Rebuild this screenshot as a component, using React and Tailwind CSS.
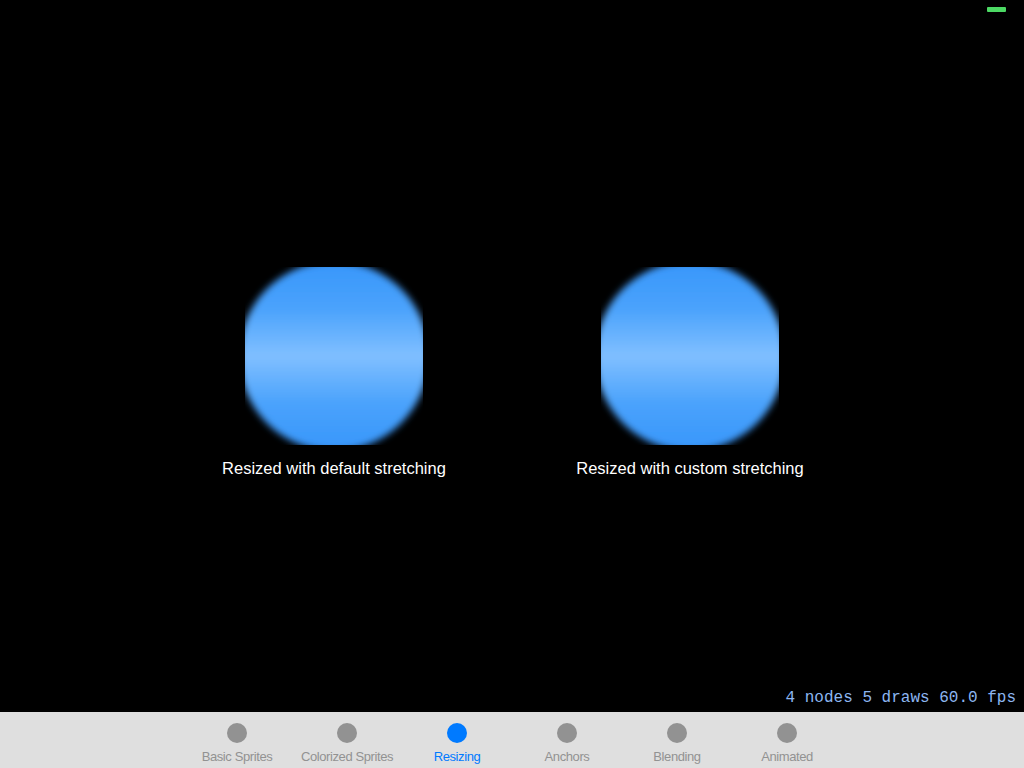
import React from "react";

const tabs = [
  { label: "Basic Sprites" },
  { label: "Colorized Sprites" },
  { label: "Resizing", active: true },
  { label: "Anchors" },
  { label: "Blending" },
  { label: "Animated" },
];

const Bubble = ({ id }) => (
  <svg width="178" height="178" viewBox="0 0 178 178" className="block">
    <defs>
      <linearGradient id={`g-${id}`} x1="0" y1="0" x2="0" y2="1">
        <stop offset="0" stopColor="#3796fb" />
        <stop offset="0.25" stopColor="#4aa2fc" />
        <stop offset="0.5" stopColor="#80bfff" />
        <stop offset="0.75" stopColor="#4aa2fc" />
        <stop offset="1" stopColor="#3796fb" />
      </linearGradient>
      <filter id={`b-${id}`} x="-20%" y="-20%" width="140%" height="140%">
        <feGaussianBlur stdDeviation="3.5" />
      </filter>
    </defs>
    <circle cx="89" cy="89" r="95" fill={`url(#g-${id})`} filter={`url(#b-${id})`} />
  </svg>
);

export default function App() {
  return (
    <div
      className="w-[1024px] h-[768px] flex flex-col overflow-hidden"
      style={{ fontFamily: '"Liberation Sans", Arial, sans-serif' }}
    >
      {/* scene */}
      <div className="relative h-[712px] bg-black">
        <div className="absolute top-[7px] right-[18px] w-[19px] h-[5px] rounded-[1px] bg-[#4cd964]" />

        <div className="flex justify-center pt-[267px]">
          <div className="w-[356px] flex flex-col items-center">
            <Bubble id="a" />
            <p className="mt-[13px] text-[16.5px] leading-[20px] text-white">
              Resized with default stretching
            </p>
          </div>
          <div className="w-[356px] flex flex-col items-center">
            <Bubble id="b" />
            <p className="mt-[13px] text-[16.5px] leading-[20px] text-white">
              Resized with custom stretching
            </p>
          </div>
        </div>

        <div
          className="absolute right-[8px] bottom-[4px] text-[16px] leading-[20px] text-[#8db6f0]"
          style={{ fontFamily: '"Liberation Mono", "Courier New", monospace' }}
        >
          4 nodes 5 draws 60.0 fps
        </div>
      </div>

      {/* tab bar */}
      <div className="h-[56px] bg-[#dfdfdf] flex justify-center">
        {tabs.map((t) => (
          <div key={t.label} className="w-[110px] flex flex-col items-center pt-[11px]">
            <div
              className={
                t.active
                  ? "w-[20px] h-[20px] rounded-full bg-[#007aff]"
                  : "w-[20px] h-[20px] rounded-full bg-[#929292]"
              }
            />
            <span
              className={
                t.active
                  ? "mt-[5px] text-[13px] leading-[17px] tracking-[-0.4px] text-[#007aff]"
                  : "mt-[5px] text-[13px] leading-[17px] tracking-[-0.4px] text-[#929292]"
              }
            >
              {t.label}
            </span>
          </div>
        ))}
      </div>
    </div>
  );
}
